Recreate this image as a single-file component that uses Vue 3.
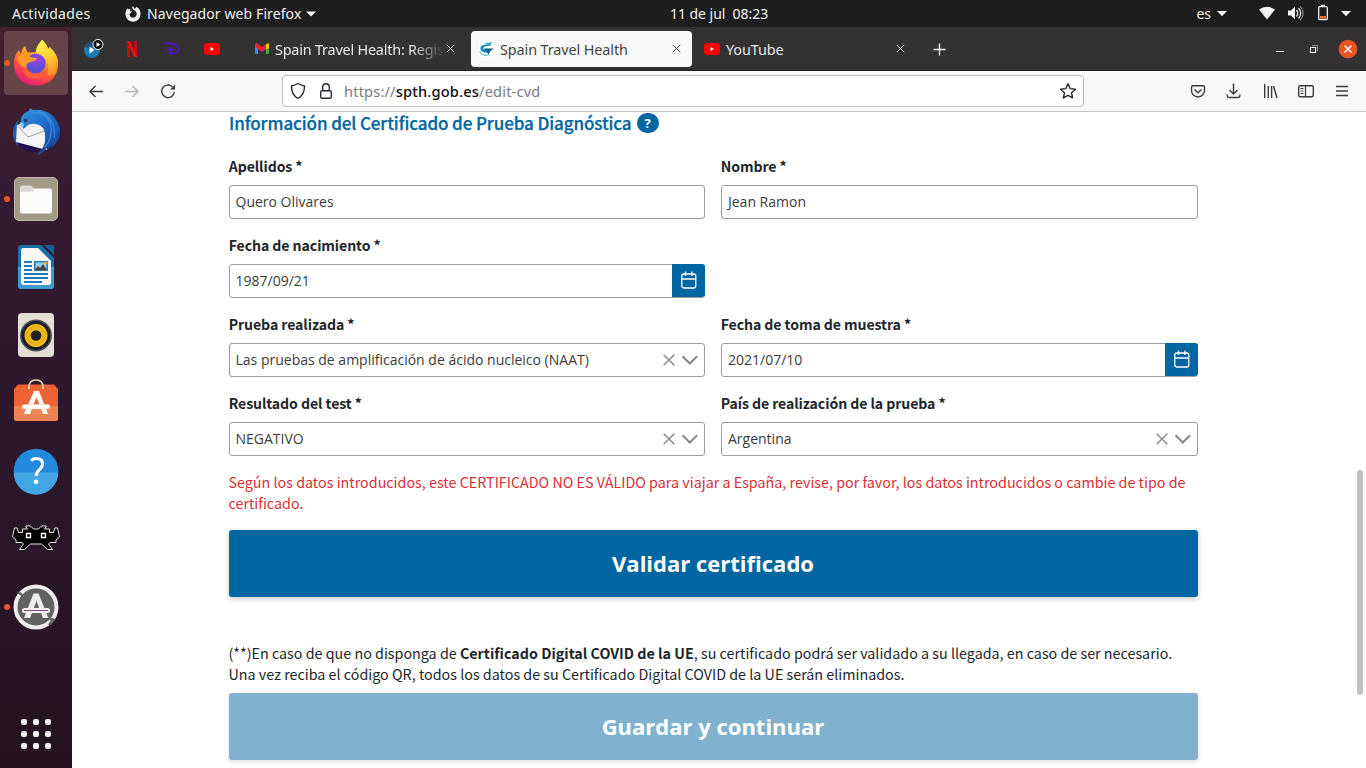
<script setup>
const rowsTop = [
  [{ label: 'Apellidos *', value: 'Quero Olivares' }, { label: 'Nombre *', value: 'Jean Ramon' }],
  [{ label: 'Fecha de nacimiento *', value: '1987/09/21', kind: 'date' }],
  [
    { label: 'Prueba realizada *', value: 'Las pruebas de amplificación de ácido nucleico (NAAT)', kind: 'select' },
    { label: 'Fecha de toma de muestra *', value: '2021/07/10', kind: 'date' },
  ],
  [
    { label: 'Resultado del test *', value: 'NEGATIVO', kind: 'select' },
    { label: 'País de realización de la prueba *', value: 'Argentina', kind: 'select' },
  ],
]
const fields = rowsTop.flatMap((r) => (r.length === 1 ? [r[0], null] : r))
</script>

<template>
  <div class="desktop">
    <header class="topbar">
      <span class="activities">Actividades</span>
      <svg class="ff-mono" width="16" height="16" viewBox="0 0 16 16">
        <path d="M7.2.3c1.3.2 2 1.200 2 2.300 1.200-.2 2-.9 2.300-1.900C14.200 2 15.700 4.700 15.500 8.200 15.200 12.600 12.100 15.700 8 15.700S.6 12.500.5 8.300C.4 6 1 4 2.500 2.200c.2.700.4 1.100.8 1.400C3.900 2.900 4.600 2.700 5.500 2.800 5 3.700 5 4.500 5.300 5.200H7c-.2 1.100-1.500 1.600-2.400 2.500-.3 2.300 1.100 4 3.400 4 2.200 0 3.900-1.600 3.700-4.100-.1-1.300-.7-2.100-1.700-2.900C8.400 3.900 6.900 2.700 7.200.3z" fill="#f2f2f2" />
      </svg>
      <span class="appname">Navegador web Firefox</span>
      <svg class="caret" width="10" height="6" viewBox="0 0 10 6"><path d="M0 .5h10L5 5.500z" fill="#f2f2f2" /></svg>
      <span class="clock">11 de jul&nbsp; 08:23</span>
      <span class="lang">es</span>
      <svg class="status" width="154" height="27" viewBox="1212 0 154 27">
        <g fill="#f2f2f2">
          <path d="M1217 11h10l-5 5.200z" />
          <path d="M1259 9.500q8-5.500 16 0l-8 10z" />
          <path d="M1288 10.500h3l4-4v13l-4-4h-3z" />
          <path d="M1341 11h10l-5 5.200z" />
        </g>
        <g fill="none" stroke="#f2f2f2">
          <path d="M1296.500 10q2.500 3 0 6.500" stroke-width="1.300" />
          <path d="M1298.500 8q4.500 5 0 10.500" stroke-width="1.200" />
          <path d="M1300 6q6.500 7 0 14.500" stroke="#9a9a9a" />
          <rect x="1318.700" y="6.700" width="8.600" height="12.800" rx="1" stroke-width="1.300" />
          <path d="M1321 5.500h4" stroke-width="1.400" />
        </g>
        <path d="M1320 16h6v2.500h-6z" fill="#f36a2f" />
      </svg>
    </header>

    <div class="work">
      <nav class="dock">
        <div class="app current"><i class="dot" />
          <svg width="48" height="48" viewBox="0 0 48 48">
            <defs>
              <linearGradient id="fa" x1=".8" y1="0" x2=".3" y2="1"><stop offset="0" stop-color="#fff44f" /><stop offset=".35" stop-color="#ffb32a" /><stop offset=".65" stop-color="#ff5a36" /><stop offset="1" stop-color="#e6157a" /></linearGradient>
              <radialGradient id="fb" cx=".55" cy=".3"><stop offset="0" stop-color="#a83fe6" /><stop offset="1" stop-color="#5a4fd8" /></radialGradient>
              <linearGradient id="fc" x1=".3" y1="0" x2=".7" y2="1"><stop offset="0" stop-color="#fff44f" /><stop offset=".5" stop-color="#ffd033" /><stop offset="1" stop-color="#ff8a2a" /></linearGradient>
            </defs>
            <path d="M30 1c3 2.500 5.500 6 6 9 1-.5 1.500-1 1.500-2 6 5 8.500 11 8.500 17 0 12.500-9 21.500-22 21.500S2 37.500 2 25.500C2 19 3.500 15 7 11c.5 2 1 3 2 4C9.500 11 11 8.500 13.500 7c0 3 1 5 2.500 6.500l9-.5C24 8 28 3.500 30 1z" fill="url(#fa)" />
            <path d="M30 1c3 2.500 5.500 6 6 9 1-.5 1.500-1 1.500-2 6 5 8.500 11 8.500 17-1 8-6 12-11 12 3-8 2-15-3-19-4-2-8-3-8-6C24 8 28 3.500 30 1z" fill="url(#fc)" />
            <circle cx="23.800" cy="24.500" r="9.800" fill="url(#fb)" />
            <path d="M5 19c3-4 6-5 10-4 2 3 5 4 10 4-1 3-4 3.500-7 4-3 1-4 3-4 6-5-1-8-5-9-10z" fill="#ff9b25" />
            <path d="M12.500 27c2 9 16 11 22 4-1 8-13 11-19 7-3-2-4-6-3-11z" fill="#ff5f38" />
          </svg>
        </div>
        <div class="app">
          <svg width="48" height="48" viewBox="0 0 48 48">
            <defs><linearGradient id="tb" x1=".2" y1="0" x2=".7" y2="1"><stop offset="0" stop-color="#2f8fdd" /><stop offset=".5" stop-color="#1f66c4" /><stop offset="1" stop-color="#173f95" /></linearGradient></defs>
            <path d="M7 12C-1 20-1 32 6 39l1-3-2-16z" fill="#1c5db5" />
            <path d="M4 34l17 4 11 4c-9 6-23 3-28-8z" fill="#24104c" />
            <path d="M5 18l9-3 18 1 3 27-12-3-19-5z" fill="#f5f5f6" />
            <path d="M5.500 18.500L16 30l17-6" fill="none" stroke="#a3a6ad" />
            <path d="M9 17C8 10 11 6 17 4l1-3 3 2C34 1 45 9 48 22c0 9-3 15-9 19l1-3-5 6 1-5c-3 5-6 8-11 9 4-4 8-9 8-15 1-7-1-13-6-15-5-2-10-2-13 2l-3 2z" fill="url(#tb)" />
            <path d="M20 5c9 0 18 6 19 15 1 8-1 14-6 20M26 4c12 4 18 14 16 27" fill="none" stroke="#4ba6ee" stroke-width="1.200" opacity=".6" />
            <circle cx="13.500" cy="13.500" r="1.800" fill="#24405f" />
            <path d="M8.500 15l-1 4 3 2q2-2 1-5z" fill="#8ccdf0" />
          </svg>
        </div>
        <div class="app"><i class="dot" />
          <svg width="48" height="48" viewBox="0 0 48 48">
            <rect x="2.500" y="2.500" width="43" height="43" rx="4.500" fill="#a29b88" stroke="#bdb6a5" />
            <path d="M8 36V12.500q0-2 2-2h9l3.500 3.500h15q2 0 2 2V36q0 2-2 2H10q-2 0-2-2z" fill="#dcd9d2" />
            <path d="M8 17l12.500-.5 2-3H38q2 0 2 2v21q0 2-2 2H10q-2 0-2-2z" fill="#fbfbfa" />
          </svg>
        </div>
        <div class="app">
          <svg width="48" height="48" viewBox="0 0 48 48">
            <path d="M9 2h20l13 13v28q0 3-3 3H9q-3 0-3-3V5q0-3 3-3z" fill="#1b6fa8" />
            <path d="M6 24h36v19q0 3-3 3H9q-3 0-3-3z" fill="#3c9ccd" />
            <path d="M32 2h8q2 0 2 2v8z" fill="#126293" />
            <path d="M11 5h15l13 13v21q0 3-3 3H12q-3 0-3-3V7q0-2 2-2z" fill="#f7f8fa" />
            <path d="M12 19h8M12 23h8M12 27h8M12 31h24M12 35h24M12 39h18" stroke="#1979b6" stroke-width="2" />
            <rect x="22" y="18" width="14" height="10" fill="#247ab8" /><path d="M23.500 19.500h11v7h-11z" fill="#9bcfec" /><path d="M23 27l3-4 2 2 3-4 4 6z" fill="#454545" /><circle cx="34" cy="20" r="1.500" fill="#f6b617" />
          </svg>
        </div>
        <div class="app">
          <svg width="48" height="48" viewBox="0 0 48 48">
            <rect x="6" y="2" width="36" height="44" rx="4" fill="#e4dfd5" />
            <circle cx="24" cy="24.500" r="16" fill="#50525a" /><circle cx="24" cy="24.500" r="14.500" fill="#1a1c28" /><circle cx="24" cy="24.500" r="11.500" fill="#efb91b" /><circle cx="24" cy="24.500" r="9" fill="none" stroke="#d6a016" stroke-width=".8" /><circle cx="24" cy="24.500" r="5.300" fill="#232323" />
          </svg>
        </div>
        <div class="app">
          <svg class="bag" width="48" height="48" viewBox="0 0 48 48">
            <path d="M6 7.500h36l4 4.500v29q0 3-3 3H5q-3 0-3-3V12z" fill="#ed6336" /><path d="M2 29h44v12q0 3-3 3H5q-3 0-3-3z" fill="#f08456" />
            <path d="M17 12V10q0-7 7-7t7 7v2" fill="none" stroke="#eed8b0" stroke-width="1.700" />
            <path d="M22 14h5l9 23h-5l-6.500-17L18 37h-6z" fill="#fff" /><rect x="10" y="27.500" width="28" height="4.500" rx="2.200" fill="#fff" stroke="#efc4ad" stroke-width=".6" />
          </svg>
        </div>
        <div class="app">
          <svg width="48" height="48" viewBox="0 0 48 48">
            <circle cx="24" cy="24" r="22.300" fill="#218ada" /><path d="M1.700 25.500h44.600a22.300 22.300 0 01-44.600 0z" fill="#42a5e4" />
            <path d="M19 13.500q2.500-2 5.500-2 6 0 6 5.500 0 3-3.300 5.800-3 2.500-3 6.200" fill="none" stroke="#fff" stroke-width="3" /><circle cx="24" cy="34.800" r="2.400" fill="#fff" />
          </svg>
        </div>
        <div class="app">
          <svg width="48" height="48" viewBox="0 0 48 48">
            <path d="M13.500 11h5l3 3h5l3-3h5l-2 3h5v3.500h4L43 13h2.500L47.500 22l-3.500 3v2.500h-6l-1.500 1.500 4 5.500h-5l-6-5.500h-11l-6 5.500h-5l4-5.500-1.500-1.500h-6V25L.5 22l2-9H5l1.500 4.500h4V14h5z" fill="#000" stroke="#e8e8e8" stroke-width="1" />
            <path d="M14.500 18.500h4v4h-4zM29.500 18.500h4v4h-4z" fill="#000" stroke="#fff" stroke-width="1.300" />
          </svg>
        </div>
        <div class="app"><i class="dot" />
          <svg width="48" height="48" viewBox="0 0 48 48">
            <circle cx="24" cy="24" r="20.500" fill="#626262" stroke="#eee" stroke-width="4" />
            <path d="M6 9l4 3M38 36l5 1M37 42l3-4" stroke="#626262" stroke-width="2.500" />
            <path d="M21.500 10.500h5L36.500 35H31l-6.500-17L18 35h-6z" fill="#eee" /><rect x="10" y="25" width="28" height="5" rx="2.500" fill="#f2f2f2" /><path d="M12 27.500h24" stroke="#75366b" stroke-width=".9" />
          </svg>
        </div>
        <div class="launcher"><i v-for="n in 9" :key="n" /></div>
      </nav>

      <section class="window">
        <div class="tabs">
          <div class="pin p1">
            <svg width="20" height="20" viewBox="0 0 20 20"><circle cx="8" cy="11" r="8" fill="#167cae" /><path d="M1 8a8 8 0 0110-4l-5 6z" fill="#1b4e7c" /><path d="M5.500 7.500v7l5-3.500z" fill="#fff" /><circle cx="14" cy="5.500" r="5" fill="#000" stroke="#fff" /><path d="M12.500 3v5l4-2.500z" fill="#fff" /></svg>
          </div>
          <div class="pin p2"><svg width="10" height="16" viewBox="0 0 10 16"><path d="M0 0h3v16H0zM7 0h3v16H7z" fill="#c9060f" /><path d="M0 0h3l7 16H7z" fill="#f20d18" /></svg></div>
          <div class="pin p3"><svg width="17" height="14" viewBox="0 0 17 14"><g fill="none" stroke="#5211d9"><path d="M.5 2.300C5 .3 15 1.500 15.600 7c.4 3.800-4.600 5-8.600 4.300" stroke-width="1.500" /><path d="M7.500 4.500v7.500" stroke-width="1.600" /><path d="M6.500 7C3 7 2 8.300 4.500 9.700" stroke-width="1.200" /><path d="M7.500 7.500h4" stroke-width="1" /></g></svg></div>
          <div class="pin p4"><svg width="16" height="12" viewBox="0 0 16 12"><rect width="16" height="12" rx="3" fill="#f00" /><path d="M6.500 4v4l3.500-2z" fill="#fff" /></svg></div>
          <div class="tab t1">
            <svg width="16" height="12" viewBox="0 0 16 12"><path d="M1 2h3v9H2q-1 0-1-1z" fill="#4285f4" /><path d="M12 2h3v8q0 1-1 1h-2z" fill="#34a853" /><path d="M12 1l3-.8V5l-3 2z" fill="#fbbc04" /><path d="M1 1.500Q2-.5 4 1l4 3 4-3v5L8 9 4 6 1 4z" fill="#ea2435" /></svg>
            <span class="tt fade">Spain Travel Health: Regis</span>
            <svg class="x" width="9" height="9" viewBox="0 0 9 9"><path d="M.8.8l7.400 7.400M8.200.8L.8 8.200" stroke="#e8e8e8" /></svg>
          </div>
          <div class="tab active">
            <svg width="16" height="16" viewBox="0 0 16 16"><rect width="16" height="16" fill="#fff" /><path d="M12 4C5 2.500 1 5 1.500 8c.5 4 8 5 12 0-4 1-8 1-9.500-.5C5 5 9 4.500 12 5z" fill="#078bc0" /><path d="M5 7.500h10l-3 2-2.500 4L7 10z" fill="#135e95" /><path d="M6 1.500l3 .5 4.500-1-2.500 3-3-.5z" fill="#20a0bd" /><path d="M1 10.500c1 4 6 4.500 9 3" fill="none" stroke="#19aac9" /></svg>
            <span class="tt">Spain Travel Health</span>
            <svg class="x" width="9" height="9" viewBox="0 0 9 9"><path d="M.8.8l7.400 7.400M8.200.8L.8 8.200" stroke="#444" /></svg>
          </div>
          <div class="tab t3">
            <svg width="16" height="12" viewBox="0 0 16 12"><rect width="16" height="12" rx="3" fill="#f00" /><path d="M6.500 4v4l3.500-2z" fill="#fff" /></svg>
            <span class="tt">YouTube</span>
            <svg class="x" width="9" height="9" viewBox="0 0 9 9"><path d="M.8.8l7.400 7.400M8.200.8L.8 8.200" stroke="#e8e8e8" /></svg>
          </div>
          <svg class="plus" width="13" height="13" viewBox="0 0 13 13"><path d="M6.500.5v12M.5 6.500h12" stroke="#eee" stroke-width="1.400" /></svg>
          <svg class="winctl" width="82" height="20" viewBox="1276 39 82 20">
            <path d="M1276 51.500h8" stroke="#fff" />
            <path d="M1312 45.500h5.500v5.500" fill="none" stroke="#999" /><rect x="1310.500" y="47.500" width="5" height="5" fill="none" stroke="#fff" />
            <circle cx="1348" cy="49" r="9.300" fill="#e95420" /><path d="M1344.500 45.500l7 7M1351.500 45.500l-7 7" stroke="#fff" stroke-width="1.500" />
          </svg>
        </div>

        <div class="toolbar">
          <svg class="navs" width="92" height="20" viewBox="86 81 92 20" fill="none" stroke="#3a3a3f" stroke-width="1.400">
            <path d="M103 91.500H90M95.500 86l-5.500 5.500 5.500 5.500" />
            <path d="M125 91.500h13M132.500 86l5.500 5.500-5.500 5.500" stroke="#b5b5b7" />
            <path d="M174.300 92a6.300 6.300 0 11-2-5.300" /><path d="M175 84.500v5h-5z" fill="#3a3a3f" stroke="none" />
          </svg>
          <div class="url">
            <svg width="50" height="20" viewBox="287 81 50 20" fill="none" stroke="#2b2a33" stroke-width="1.400">
              <path d="M298 83.500c2.500 1.300 4.500 2 6.500 2.500.2 6-1.500 9.500-6.500 12.500-5-3-6.700-6.500-6.500-12.500 2-.5 4-1.200 6.500-2.500z" />
              <rect x="320.700" y="90.700" width="10.600" height="7.600" rx="1.500" /><path d="M322.700 90.500v-3.300q0-3.500 3.300-3.500t3.300 3.500v3.300" />
            </svg>
            <span class="address">https://<b>spth.gob.es</b>/edit-cvd</span>
            <svg class="star" width="18" height="18" viewBox="0 0 18 18"><path d="M9 1.800l2.200 4.800 5.200.6-3.900 3.500 1.100 5.200L9 13.300l-4.600 2.600 1.100-5.200L1.600 7.200l5.200-.6z" fill="none" stroke="#2b2a33" stroke-width="1.400" stroke-linejoin="round" /></svg>
          </div>
          <svg class="tools" width="162" height="20" viewBox="1188 81 162 20" fill="none" stroke="#3a3a3f" stroke-width="1.400">
            <path d="M1193 85.700h10q1.500 0 1.500 1.500v3.300a6.500 6.500 0 01-13 0v-3.300q0-1.500 1.500-1.500zM1194.500 89.500l3.500 3.300 3.500-3.300" />
            <path d="M1233.500 83.500v10M1229.500 90l4 4 4-4M1227.200 94.500v1.300q0 1.700 1.500 1.700h9.600q1.500 0 1.500-1.700v-1.300" />
            <path d="M1264.700 84v14M1268.300 86v12M1271.600 86v12M1273.500 86l3.500 12" />
            <rect x="1298.700" y="85.700" width="14.600" height="11" rx="1.500" /><path d="M1305.500 86v11M1300.500 88.500h3M1300.500 91h3M1300.500 93.500h3" stroke-width="1.200" />
            <path d="M1336 86.500h12M1336 91h12M1336 95.500h12" />
          </svg>
        </div>

        <main class="page">
          <h1><span>Información del Certificado de Prueba Diagnóstica</span><em>?</em></h1>
          <div class="form">
            <div v-for="(f, i) in fields" :key="i" class="field">
              <template v-if="f">
                <label>{{ f.label }}</label>
                <div class="control">
                  <span class="value">{{ f.value }}</span>
                  <svg v-if="f.kind === 'select'" class="sel" width="36" height="12" viewBox="0 0 36 12" fill="none" stroke="#888"><path d="M.7.700l10.600 10.600M11.300.7L.7 11.300" stroke-width="1.400" /><path d="M19.500 2.300l7.300 7.200 7.300-7.200" stroke-width="2" /></svg>
                  <div v-if="f.kind === 'date'" class="cal">
                    <svg width="16" height="18" viewBox="0 0 16 18" fill="none" stroke="#fff" stroke-width="1.300"><rect x=".8" y="3" width="14" height="14" rx="2" /><path d="M1 8h14M4.500.5V5M11 .5V5" /></svg>
                  </div>
                </div>
              </template>
            </div>
          </div>
          <p class="error"><span>Según los datos introducidos, este CERTIFICADO NO ES VÁLIDO para viajar a España, revise, por favor, los datos introducidos o cambie de tipo de</span><br>certificado.</p>
          <button class="btn">Validar certificado</button>
          <p class="note"><span>(**)En caso de que no disponga de <b>Certificado Digital COVID de la UE</b>, su certificado podrá ser validado a su llegada, en caso de ser necesario.</span><br><span>Una vez reciba el código QR, todos los datos de su Certificado Digital COVID de la UE serán eliminados.</span></p>
          <button class="btn off">Guardar y continuar</button>
          <div class="thumb" />
        </main>
      </section>
    </div>
  </div>
</template>

<style>
body { margin: 0; overflow: hidden; }
</style>
<style scoped>
* { box-sizing: border-box; }
svg { display: block; flex: none; }
.desktop { width: 1366px; height: 768px; overflow: hidden; display: flex; flex-direction: column; font-family: "Noto Sans", sans-serif; font-size: 14px; white-space: nowrap; }
.topbar { height: 27px; flex: none; background: #1d1d1d; color: #f2f2f2; display: flex; align-items: center; padding-left: 12px; }
.activities { width: 79px; letter-spacing: .35px; }
.ff-mono { margin-left: 34px; margin-right: 6px; }
.appname { width: 154px; letter-spacing: .1px; }
.caret { margin-left: 5px; }
.clock { margin-left: 354px; width: 100px; letter-spacing: -.04px; }
.lang { margin-left: auto; margin-right: 1px; }
.work { display: flex; flex: 1; min-height: 0; }
.dock { width: 72px; flex: none; background: linear-gradient(#43202c, #351b32 22%, #2c172c 55%, #24131f); padding: 4px 4px 0; display: flex; flex-direction: column; gap: 4px; }
.app { width: 64px; height: 64px; flex: none; display: grid; place-items: center; border-radius: 4px; position: relative; }
.current { background: #654549; }
.bag { margin-top: -4px; }
.dot { position: absolute; left: 0; top: 29px; width: 6px; height: 6px; border-radius: 50%; background: #e95420; }
.launcher { display: grid; grid-template-columns: repeat(3, 6px); gap: 6px; margin: auto 0 19px 17px; }
.launcher i { width: 6px; height: 6px; border-radius: 2px; background: #f2f2f2; }
.window { flex: 1; display: flex; flex-direction: column; min-width: 0; }
.tabs { height: 44px; flex: none; background: #333132; border-bottom: 1px solid #222; display: flex; align-items: center; color: #e9e9e9; }
.pin { display: grid; place-items: center; width: 40px; }
.p1 { margin-left: 2px; } .p2 { width: 35px; } .p3 { width: 45px; } .p4 { width: 36px; }
.tab { display: flex; align-items: center; height: 36px; width: 221px; padding: 0 11px 0 9px; font-size: 14.400px; }
.tt { margin-left: 5px; letter-spacing: -.1px; padding-top: 2px; }
.tab .x { margin-left: auto; }
.t1 { margin-left: 15px; width: 221px; margin-right: 5px; }
.t1 .tt { width: 170px; letter-spacing: -.2px; -webkit-mask-image: linear-gradient(90deg, #000 80%, transparent); mask-image: linear-gradient(90deg, #000 80%, transparent); }
.active { background: #f8f8f8; border-radius: 4px; color: #444; padding-left: 8px; }
.t3 { margin-left: 3px; width: 221px; }
.t3 .tt { margin-left: 6px; }
.plus { margin-left: 17px; margin-top: 1px; }
.winctl { margin-left: auto; margin-right: 8px; }
.toolbar { height: 41px; flex: none; background: #f8f8f8; border-bottom: 1px solid #c4c4c4; display: flex; align-items: center; padding: 0 16px 0 14px; }
.url { margin-left: 104px; width: 802px; height: 32px; background: #fff; border: 1px solid #bdbdbf; border-radius: 4px; display: flex; align-items: center; padding: 0 6px 0 4px; }
.address { margin-left: 7px; font-size: 14.600px; letter-spacing: .18px; color: #7b7b80; }
.address b { color: #0c0c0d; font-weight: 500; }
.star { margin-left: auto; }
.tools { margin-left: auto; }
.page { flex: 1; min-height: 0; background: #fff; position: relative; padding: 0 168px 0 157px; color: #212529; }
h1 { margin: 0; height: 44px; display: flex; align-items: flex-start; font: 500 17px/22px "Noto Sans CJK SC", sans-serif; letter-spacing: -.1px; color: #0066a1; -webkit-text-stroke: .25px #0066a1; }
h1 em { margin: 1px 0 0 5px; width: 22px; height: 20px; border-radius: 10px; background: #0066a1; color: #fff; font: 700 13px/20px "Open Sans", sans-serif; text-align: center; -webkit-text-stroke: 0; }
.form { display: grid; grid-template-columns: 476px 477px; column-gap: 16px; grid-auto-rows: 79px; width: 969px; }
.field { display: flex; flex-direction: column; }
label { font: 700 14.100px/20px "Noto Sans CJK SC", sans-serif; letter-spacing: -.08px; height: 29px; margin-left: -.3px; }
.control { height: 34px; border: 1px solid #9b9b9b; border-radius: 3px; display: flex; align-items: center; padding: 0 5px 0 5.500px; font: 14px/20px "Open Sans", sans-serif; color: #3b3b3b; }
.field:nth-child(even) .control { padding-left: 6px; }
.sel { margin-left: auto; }
.cal { margin: -2px -6px -1px auto; width: 33px; height: 33px; background: #0066a1; border-radius: 0 3px 3px 0; display: grid; place-items: center; padding-bottom: 2px; }
.error, .note { margin: 0 0 0 -.5px; font: 14.310px/21px "Noto Sans CJK SC", sans-serif; letter-spacing: .008px; height: 42px; }
.error { color: #d92f38; margin-top: -1px; }
.btn { display: block; width: 969px; height: 67px; border: 0; border-radius: 3px; padding: 0 1px 0 0; background: #0066a1; color: #fff; font: 700 22px/67px "Open Sans", sans-serif; box-shadow: 0 2px 5px rgba(0,0,0,.22); margin-top: 17px; }
.note { margin-top: 45px; }
.off { background: #80b2cf; margin-top: 9px; box-shadow: 0 2px 5px rgba(0,0,0,.12); }
.thumb { position: absolute; right: 3px; top: 358px; width: 6px; height: 225px; border-radius: 3px; background: #c1c1c1; }
</style>
